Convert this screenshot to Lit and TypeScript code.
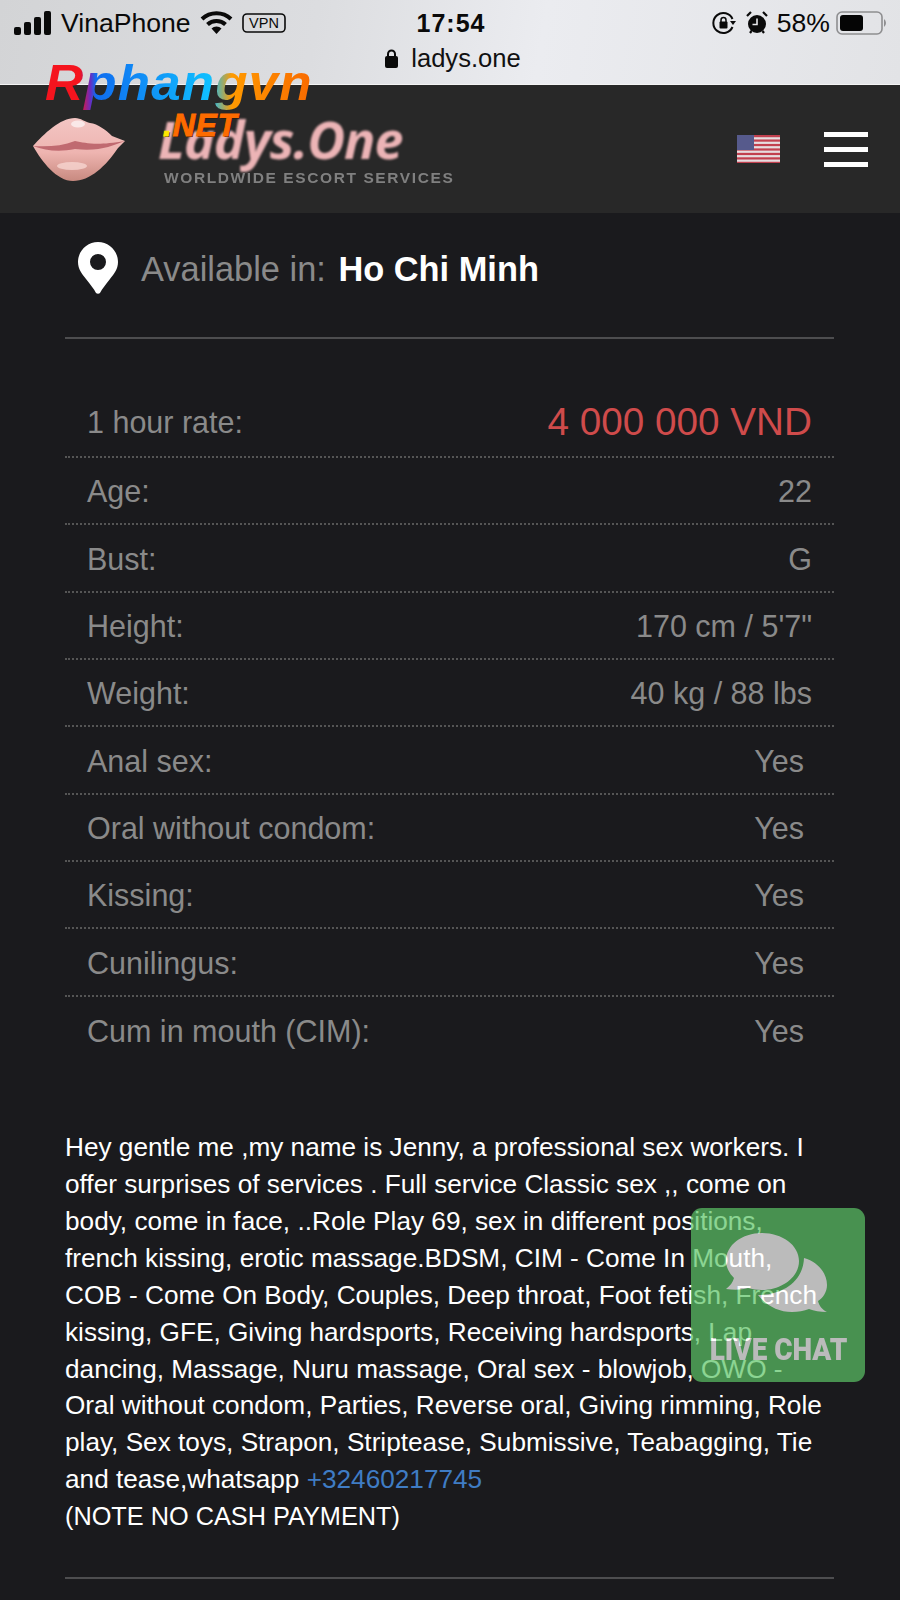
import { LitElement, html, css, svg } from "lit";
import { customElement } from "lit/decorators.js";

const rows: [string, string, string?][] = [
  ["Age:", "22"],
  ["Bust:", "G"],
  ["Height:", `170 cm / 5'7"`],
  ["Weight:", "40 kg / 88 lbs"],
  ["Anal sex:", "Yes", "yes"],
  ["Oral without condom:", "Yes", "yes"],
  ["Kissing:", "Yes", "yes"],
  ["Cunilingus:", "Yes", "yes"],
  ["Cum in mouth (CIM):", "Yes", "yes"],
];

const stripes = [0, 1, 2, 3, 4, 5, 6].map(
  (i) => svg`<rect x="0" y="${i * 4.46}" width="43" height="2.23" fill="#c2404f"/>`
);

@customElement("app-root")
export class AppRoot extends LitElement {
  static styles = css`
    :host { display: block; width: 900px; height: 1600px; overflow: hidden; position: relative; background: #1a1a1d; font-family: "Liberation Sans", Arial, sans-serif; }
    .status { height: 85px; box-sizing: border-box; border-bottom: 1px solid #f4f4f4; background: linear-gradient(100deg, #d3d4d6 0%, #dcdde0 35%, #ebecf0 60%, #e2e3e6 100%); color: #0a0a0a; position: relative; }
    .sbar { display: grid; grid-template-columns: 1fr auto 1fr; align-items: center; height: 46px; padding: 0 12px 0 14px; font-size: 26.6px; }
    .sleft, .sright { display: flex; align-items: center; }
    .sleft { gap: 9px; }
    .sright { justify-content: flex-end; gap: 6px; }
    .time { font-weight: 700; letter-spacing: 1px; font-size: 25px; }
    .addr { display: flex; justify-content: center; align-items: center; gap: 13px; font-size: 25.6px; height: 24px; padding-left: 6px; color: #111; }
    .header { height: 128px; background: #282828; display: flex; align-items: center; position: relative; box-sizing: border-box; padding-right: 32px; }
    .lips { margin-left: 32px; flex: none; }
    .brand { margin-left: 30px; width: 310px; }
    .brand .name { font: italic 700 52px/56px "Open Sans", sans-serif; color: #ecb4b6; letter-spacing: -1px; white-space: nowrap; filter: blur(.8px); }
    .brand .sub { font: 700 15.5px/18px "Liberation Sans", sans-serif; letter-spacing: 1.6px; color: #808080; margin: 2px 0 0 6px; white-space: nowrap; filter: blur(.5px); }
    .flag { margin-left: auto; flex: none; display: block; }
    .burger { margin-left: 44px; width: 44px; display: flex; flex-direction: column; gap: 10px; }
    .burger i { display: block; height: 5px; background: #fff; }
    .wm { position: absolute; left: 45px; top: 54px; font: italic 900 50px/58px "Liberation Sans", sans-serif; letter-spacing: 1px; white-space: nowrap; transform: scaleX(1.06); transform-origin: left; background: linear-gradient(90deg, #f5141e 0 13%, #6a2cc0 17%, #0f6cf0 19%, #10c0ff 62%, #ff9a00 70%, #f96a00 100%); -webkit-background-clip: text; background-clip: text; color: transparent; }
    .net { position: absolute; left: 163px; top: 110px; font: italic 900 31px/32px "Liberation Sans", sans-serif; letter-spacing: 1px; color: #fd6b00; -webkit-text-stroke: 1px #fd6b00; text-shadow: 1px 1px 0 #2a1200; white-space: nowrap; }
    .net b { color: #ffe800; -webkit-text-stroke: 1px #ffe800; }
    main { padding: 0 66px 0 65px; }
    .avail { display: flex; align-items: center; border-bottom: 2px solid #4d4d4f; padding: 0 12px 12px 13px; box-sizing: border-box; height: 126px; gap: 23px; font-size: 34.4px; color: #8a8a8a; }
    .avail b { color: #fff; font-weight: 700; margin-left: 3px; }
    .avail svg { flex: none; margin-top: -2px; }
    .table { margin-top: 49px; }
    .row { display: flex; justify-content: space-between; align-items: center; height: 67.35px; box-sizing: border-box; padding: 2px 22px 0; border-bottom: 2px dotted #555; color: #8a8a8a; font-size: 30.5px; }
    .row:last-child { border-bottom: none; }
    .first { height: 70px; padding-top: 0; }
    .first .price { color: #cf4b4b; font-size: 38.7px; }
    .yes { padding-right: 8px; }
    .desc { margin: 65px 0 0; color: #fff; font-size: 26.2px; line-height: 36.9px; white-space: nowrap; }
    .desc a { color: #3f7cc4; text-decoration: none; }
    .note { font-size: 25.3px; }
    .rule { border-top: 2px solid #4d4d4f; margin-top: 42px; }
    .chat { position: absolute; left: 691px; top: 1208px; width: 174px; height: 174px; border-radius: 11px; background: #5cc466; opacity: .7; display: flex; flex-direction: column; align-items: center; color: #fff; }
    .chat svg { margin-top: 25px; margin-left: -2px; display: block; flex: none; }
    .chat span { font: 900 31px/34px "Roboto", "Liberation Sans", sans-serif; transform: scaleX(.9); margin-top: 20px; white-space: nowrap; }
  `;

  render() {
    return html`
      <div class="status">
        <div class="sbar">
          <div class="sleft">
            <svg width="38" height="24" viewBox="0 0 38 24" fill="#0a0a0a"><rect x="0" y="16" width="7" height="8" rx="2"/><rect x="10" y="11" width="7" height="13" rx="2"/><rect x="20" y="6" width="7" height="18" rx="2"/><rect x="30" y="0" width="7" height="24" rx="2"/></svg>
            <span>VinaPhone</span>
            <svg width="33" height="25" viewBox="0 0 33 25"><path d="M2 8 A21 21 0 0 1 31 8" fill="none" stroke="#0a0a0a" stroke-width="4"/><path d="M7.5 13.5 A13 13 0 0 1 25.5 13.5" fill="none" stroke="#0a0a0a" stroke-width="4"/><path d="M11.5 17.5 A7 7 0 0 1 21.5 17.5 L16.5 23 Z" fill="#0a0a0a"/></svg>
            <svg width="44" height="20" viewBox="0 0 44 20"><rect x="1" y="1" width="42" height="18" rx="4" fill="none" stroke="#0a0a0a" stroke-width="1.6"/><text x="22" y="15" text-anchor="middle" font-family="Liberation Sans" font-size="14.5" fill="#0a0a0a">VPN</text></svg>
          </div>
          <div class="time">17:54</div>
          <div class="sright">
            <svg width="24" height="24" viewBox="0 0 24 24"><path d="M20.5 16 A10 10 0 1 1 20.5 8" fill="none" stroke="#0a0a0a" stroke-width="2"/><path d="M18 10 h6 l-3 4 Z" fill="#0a0a0a"/><rect x="7.5" y="10.5" width="8" height="7" rx="1" fill="#0a0a0a"/><path d="M9 11 V9 a2.5 2.5 0 0 1 5 0 V11" fill="none" stroke="#0a0a0a" stroke-width="1.5"/></svg>
            <svg width="22" height="24" viewBox="0 0 22 24" style="margin-left:4px"><circle cx="11" cy="13" r="9" fill="#0a0a0a"/><path d="M1 5 L5 1 M21 5 L17 1 M4 22 L5.5 20 M18 22 L16.5 20" stroke="#0a0a0a" stroke-width="2.2"/><path d="M11 7.5 V13.5 H6.5" fill="none" stroke="#e8e8ea" stroke-width="1.6"/></svg>
            <span style="margin-left:3px">58%</span>
            <svg width="52" height="26" viewBox="0 0 52 26"><rect x="1" y="2" width="45" height="22" rx="5" fill="none" stroke="#8e8e90" stroke-width="1.6"/><rect x="4" y="5" width="23" height="16" rx="3" fill="#050505"/><path d="M48 9 a5 5 0 0 1 0 8 Z" fill="#8e8e90"/></svg>
          </div>
        </div>
        <div class="addr">
          <svg width="13" height="19" viewBox="0 0 13 19"><rect x="0" y="7" width="13" height="12" rx="2" fill="#0a0a0a"/><path d="M3 8 V5 a3.5 3.5 0 0 1 7 0 V8" fill="none" stroke="#0a0a0a" stroke-width="2"/></svg>
          <span>ladys.one</span>
        </div>
      </div>
      <header class="header">
        <svg class="lips" width="96" height="66" viewBox="0 0 96 66">
          <defs>
            <linearGradient id="lg" x1="0" y1="0" x2="0" y2="1"><stop offset="0" stop-color="#f3c6c4"/><stop offset=".55" stop-color="#eeb4b0"/><stop offset="1" stop-color="#c88a80"/></linearGradient>
          </defs>
          <path d="M1 30 C12 18 28 2 43 2 C49 2 53 6 58 7 C66 8 74 14 80 20 L93 25 L86 32 C74 50 58 65 41 65 C25 65 10 46 1 30 Z" fill="url(#lg)"/>
          <path d="M1 30 C16 31 30 30 43 25 C54 27 64 30 93 25 C80 30 66 36 43 33 C28 36 14 35 1 30 Z" fill="#c06a70"/>
          <ellipse cx="46" cy="8" rx="7" ry="3.5" fill="#fae8e8"/>
          <ellipse cx="40" cy="50" rx="15" ry="4" fill="#f6d4d0" opacity=".8"/>
        </svg>
        <div class="brand">
          <div class="name">Ladys.One</div>
          <div class="sub">WORLDWIDE ESCORT SERVICES</div>
        </div>
        <svg class="flag" width="43" height="28" viewBox="0 0 43 28">
          <rect width="43" height="28" fill="#e6dde0"/>
          ${stripes}
          <rect width="17" height="15" fill="#565a8c"/>
        </svg>
        <div class="burger"><i></i><i></i><i></i></div>
      </header>
      <div class="wm">Rphangvn</div>
      <div class="net"><b>.</b>NET</div>
      <main>
        <div class="avail">
          <svg width="40" height="52" viewBox="0 0 40 52"><path fill-rule="evenodd" d="M20 0 C31 0 40 9 40 20 C40 27 36 32 32 37 C28 42 24 47 22 51 C21 52 19 52 18 51 C16 47 12 42 8 37 C4 32 0 27 0 20 C0 9 9 0 20 0 Z M20 12 A8 8 0 1 0 20 28 A8 8 0 1 0 20 12 Z" fill="#fff"/></svg>
          <span>Available in: <b>Ho Chi Minh</b></span>
        </div>
        <div class="table">
          <div class="row first"><span>1 hour rate:</span><span class="price">4 000 000 VND</span></div>
          ${rows.map(
            ([k, v, c]) => html`<div class="row"><span>${k}</span><span class="${c ?? ""}">${v}</span></div>`
          )}
        </div>
        <p class="desc">Hey gentle me ,my name is Jenny, a professional sex workers. I<br>offer surprises of services . Full service Classic sex ,, come on<br>body, come in face, ..Role Play 69, sex in different positions,<br>french kissing, erotic massage.BDSM, CIM - Come In Mouth,<br>COB - Come On Body, Couples, Deep throat, Foot fetish, French<br>kissing, GFE, Giving hardsports, Receiving hardsports, Lap<br>dancing, Massage, Nuru massage, Oral sex - blowjob, OWO -<br>Oral without condom, Parties, Reverse oral, Giving rimming, Role<br>play, Sex toys, Strapon, Striptease, Submissive, Teabagging, Tie<br>and tease,whatsapp <a>+32460217745</a><br><span class="note">(NOTE NO CASH PAYMENT)</span></p>
        <div class="rule"></div>
      </main>
      <div class="chat">
        <svg width="102" height="80" viewBox="0 0 102 80" fill="#fff">
          <path d="M36 0 C56 0 73 12 73 28 C73 44 56 57 36 57 C31 57 26 56 22 55 C15 57 8 57 0 56 C4 53 7 49 8 45 C3 40 0 34 0 28 C0 12 16 0 36 0 Z"/>
          <path d="M78 25 C92 29 101 40 101 52 C101 59 97 65 92 68 C93 73 97 77 101 79 C94 79 88 78 83 76 C78 78 72 79 66 79 C52 79 40 72 32 62 C55 62 77 50 78 25 Z"/>
        </svg>
        <span>LIVE CHAT</span>
      </div>
    `;
  }
}
